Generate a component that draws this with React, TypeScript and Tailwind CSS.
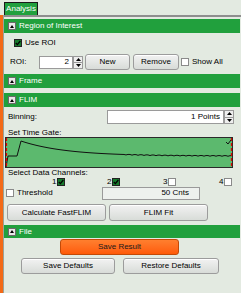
import React from "react";

const F = { fontFamily: '"Liberation Sans", Arial, sans-serif' };

function Header({ title, h = "h-[14px]" }: { title: string; h?: string }) {
  return (
    <div className={`${h} bg-[#21a03d] flex items-center pl-[4px] gap-[3px]`}>
      <div className="w-[8px] h-[8px] bg-[#e8e8e8] border border-[#6a6a6a] flex items-center justify-center">
        <svg width="4" height="3" viewBox="0 0 4 3"><path d="M0 3 L2 0 L4 3 Z" fill="#000" /></svg>
      </div>
      <span className="text-white text-[8px] leading-none">{title}</span>
    </div>
  );
}

function Check({ checked }: { checked?: boolean }) {
  return checked ? (
    <div className="w-[8px] h-[8px] shrink-0 bg-[#167a2c] border border-[#222] flex items-center justify-center">
      <svg width="6" height="6" viewBox="0 0 6 6"><path d="M0.8 3 L2.4 4.6 L5.3 1" stroke="#000" strokeWidth="1.3" fill="none" /></svg>
    </div>
  ) : (
    <div className="w-[8px] h-[8px] shrink-0 bg-white border border-[#8a8a8a]" />
  );
}

function Spin() {
  return (
    <div className="w-[10px] h-full flex flex-col border border-[#9a9a9a] bg-[#eeeeee]">
      <div className="flex-1 flex items-center justify-center border-b border-[#9a9a9a]">
        <svg width="5" height="3" viewBox="0 0 5 3"><path d="M0 3 L2.5 0 L5 3 Z" fill="#000" /></svg>
      </div>
      <div className="flex-1 flex items-center justify-center">
        <svg width="5" height="3" viewBox="0 0 5 3"><path d="M0 0 L2.5 3 L5 0 Z" fill="#000" /></svg>
      </div>
    </div>
  );
}

function Btn({ children, cls }: { children: React.ReactNode; cls: string }) {
  return (
    <div className={`flex items-center justify-center rounded-[3px] border border-[#9c9c9c] bg-gradient-to-b from-[#f2f2f2] to-[#d8dcd8] text-[8px] text-black shadow-[inset_0_1px_0_#fff] ${cls}`}>
      {children}
    </div>
  );
}

function Plot() {
  const pts: string[] = ["M1 30", "L3 19", "L12 19", "L16 4"];
  for (let x = 17; x <= 227; x += 2) {
    const y = 19 - 15 * Math.exp(-(x - 16) / 45) + (x > 120 ? (x % 6 === 1 ? 0.4 : -0.2) : 0);
    pts.push(`L${x} ${y.toFixed(2)}`);
  }
  return (
    <svg width="228" height="31" viewBox="0 0 228 31" className="block">
      <rect x="0.5" y="0.5" width="227" height="30" fill="#5cb96e" stroke="#2a2a2a" />
      <path d={pts.join(" ")} stroke="#111" strokeWidth="1" fill="none" />
      <line x1="1.5" y1="1" x2="1.5" y2="30" stroke="#e00000" strokeWidth="1.2" strokeDasharray="3 2" />
      <line x1="226.5" y1="1" x2="226.5" y2="30" stroke="#e00000" strokeWidth="1.2" strokeDasharray="3 2" />
      <path d="M221 5 L223 7 L226 3" stroke="#111" strokeWidth="1" fill="none" />
    </svg>
  );
}

export default function App() {
  return (
    <div style={F} className="w-[241px] h-[293px] bg-[#e3eae1] overflow-hidden flex flex-col text-[8px] leading-none text-black">
      <div className="h-[15px] pl-[4px] pt-[2px] flex">
        <div className="w-[34px] h-[13px] bg-[#21a03d] border border-[#1a1a1a] border-b-0 flex items-center justify-center text-white text-[8px]">
          Analysis
        </div>
      </div>
      <div className="flex flex-1">
        <div className="w-[3px] bg-[#f36a17]" />
        <div className="w-[1px] bg-[#9aa39a]" />
        <div className="flex-1 flex flex-col border-t-2 border-[#8e8e8e]">
          <div className="mt-[2px] mr-[1px]"><Header title="Region of Interest" /></div>
          <div className="h-[6px] shrink-0" />
          <div className="flex items-center pl-[10px] gap-[3px] h-[8px] shrink-0">
            <Check checked />
            <span>Use ROI</span>
          </div>
          <div className="h-[8px] shrink-0" />
          <div className="flex items-center h-[14px] shrink-0 pl-[6px]">
            <span className="w-[29px]">ROI:</span>
            <div className="flex h-[13px]">
              <div className="w-[34px] h-full bg-white border border-[#9a9a9a] flex items-center justify-end pr-[3px]">2</div>
              <Spin />
            </div>
            <Btn cls="ml-[2px] w-[45px] h-[16px]">New</Btn>
            <Btn cls="ml-[3px] w-[46px] h-[16px]">Remove</Btn>
            <div className="ml-[2px] flex items-center gap-[3px]"><Check /><span>Show All</span></div>
          </div>
          <div className="h-[5px] shrink-0" />
          <div className="mr-[1px]"><Header title="Frame" /></div>
          <div className="h-[5px] shrink-0" />
          <div className="mr-[1px]"><Header title="FLIM" /></div>
          <div className="h-[3px] shrink-0" />
          <div className="flex items-center h-[14px] shrink-0 pl-[4px]">
            <span className="w-[99px]">Binning:</span>
            <div className="w-[117px] h-[14px] bg-white border border-[#9a9a9a] flex items-center justify-end pr-[3px]">1 Points</div>
            <div className="h-[14px]"><Spin /></div>
          </div>
          <div className="h-[4px] shrink-0" />
          <div className="pl-[4px] h-[9px] shrink-0 flex items-center">Set Time Gate:</div>
          <div className="pl-[1px] shrink-0"><Plot /></div>
          <div className="h-[1px] shrink-0" />
          <div className="pl-[4px] h-[8px] shrink-0 flex items-center">Select Data Channels:</div>
          <div className="flex items-center h-[9px] shrink-0 pl-[48px]">
            <span className="w-[5px]">1:</span><Check checked />
            <span className="ml-[42px] w-[5px]">2:</span><Check checked />
            <span className="ml-[43px] w-[5px]">3:</span><Check />
            <span className="ml-[43px] w-[5px]">4:</span><Check />
          </div>
          <div className="flex items-center h-[14px] shrink-0 pl-[2px]">
            <div className="flex items-center gap-[3px] w-[96px]"><Check /><span>Threshold</span></div>
            <div className="w-[98px] h-[13px] border border-[#9a9a9a] bg-[#eef1ee] flex items-center justify-end pr-[10px]">50 Cnts</div>
          </div>
          <div className="h-[4px] shrink-0" />
          <div className="flex pl-[3px] gap-[3px] shrink-0">
            <Btn cls="w-[99px] h-[17px]">Calculate FastFLIM</Btn>
            <Btn cls="w-[99px] h-[17px]">FLIM Fit</Btn>
          </div>
          <div className="h-[4px] shrink-0" />
          <div className="mr-[1px]"><Header title="File" h="h-[13px]" /></div>
          <div className="h-[1px] shrink-0" />
          <div className="flex pl-[56px] shrink-0">
            <div className="w-[119px] h-[16px] rounded-[3px] border border-[#c24a08] bg-gradient-to-b from-[#ff7f2e] to-[#ff5a06] flex items-center justify-center text-[8px] text-[#1a1a1a]">Save Result</div>
          </div>
          <div className="h-[3px] shrink-0" />
          <div className="flex pl-[17px] gap-[8px] shrink-0">
            <Btn cls="w-[94px] h-[16px]">Save Defaults</Btn>
            <Btn cls="w-[96px] h-[16px]">Restore Defaults</Btn>
          </div>
        </div>
      </div>
    </div>
  );
}
